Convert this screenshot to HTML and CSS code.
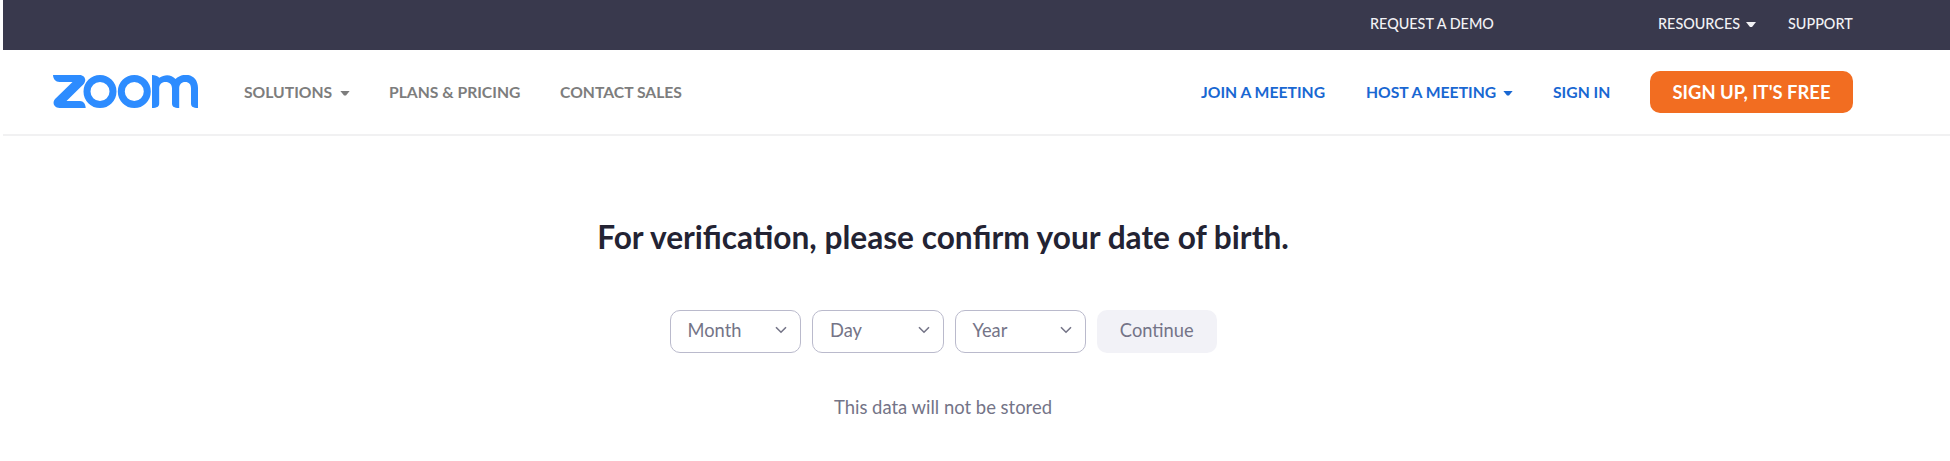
FILE: index.html
```html
<!DOCTYPE html>
<html lang="en">
<head>
<meta charset="utf-8">
<title>Verification - Zoom</title>
<link rel="stylesheet" href="styles.css">
</head>
<body>
<div class="page">
  <div class="topbar">
    <a class="demo">REQUEST A DEMO</a>
    <a class="resources">RESOURCES <i class="caret"></i></a>
    <a class="support">SUPPORT</a>
  </div>
  <header class="header">
    <svg class="logo" width="145" height="33" viewBox="0 0 145 33" fill="none" stroke="#2d8cff" stroke-width="7" aria-label="zoom">
      <path fill="#2d8cff" stroke="none" d="M0 0H26.500C32 0 34 5.500 30.500 9.200L13.500 26H27C30.500 26 32.500 29 32.700 33H6.500C.8 33-1.200 27.500 2.300 23.800L19.500 7H6.500C2.500 7 .2 4 0 0Z"/>
      <circle cx="47" cy="16.500" r="13"/>
      <circle cx="81.300" cy="16.500" r="13"/>
      <path fill="#2d8cff" stroke="none" d="M99 0C102 0 104.500 1 106.300 2.800C112 -1.200 118.500 -.6 122.500 4C131-4 145-.5 145 13V33C140 33 138 31.500 138 28.500V13.500C138 9.200 136 7 132.200 7S126.200 9.500 126.200 13.500V33C121 33 119 31.500 119 28.500V13.500C119 9.200 116.500 7 112.500 7S106.200 9.500 106.200 13.500V28.500C106.200 31.500 104 33 99 33Z"/>
    </svg>
    <nav class="nav">
      <a class="solutions">SOLUTIONS <i class="caret"></i></a>
      <a class="plans">PLANS &amp; PRICING</a>
      <a class="sales">CONTACT SALES</a>
    </nav>
    <nav class="nav nav-right">
      <a class="join">JOIN A MEETING</a>
      <a class="host">HOST A MEETING <i class="caret"></i></a>
      <a class="signin">SIGN IN</a>
      <a class="signup">SIGN UP, IT'S FREE</a>
    </nav>
  </header>
  <main class="main">
    <h1 class="title">For verification, please confirm your date of birth.</h1>
    <div class="form">
      <div class="select">Month<svg class="chevron" width="12" height="8" viewBox="0 0 12 8"><path d="M1 1.200l5 5 5-5"/></svg></div>
      <div class="select">Day<svg class="chevron" width="12" height="8" viewBox="0 0 12 8"><path d="M1 1.200l5 5 5-5"/></svg></div>
      <div class="select">Year<svg class="chevron" width="12" height="8" viewBox="0 0 12 8"><path d="M1 1.200l5 5 5-5"/></svg></div>
      <div class="continue">Continue</div>
    </div>
    <p class="note">This data will not be stored</p>
  </main>
</div>
</body>
</html>
```
FILE: styles.css
```css
* { box-sizing: border-box; }
body { margin: 0; background: #fff; font-family: Lato, sans-serif; }
.page { margin-left: 3px; height: 461px; overflow: hidden; }
.topbar { height: 50px; background: #39394d; color: #f2f2f5; display: flex; justify-content: flex-end; align-items: center; padding: 0 98px 3px 0; font-size: 14.400px; line-height: 20px; font-weight: 500; }
.topbar a, .nav a { white-space: nowrap; display: flex; align-items: center; justify-content: space-between; }
.demo { width: 124px; margin-right: 164px; }
.resources { width: 98px; margin-right: 32px; }
.support { width: 64px; }
.caret { width: 10px; height: 5px; margin-top: 2px; background: currentColor; clip-path: polygon(0 0, 100% 0, 60% 100%, 40% 100%); }
.header { height: 86px; border-bottom: 2px solid #f1f1f2; display: flex; align-items: center; padding: 0 97px 0 50px; }
.logo { flex: none; margin-top: -1px; }
.nav { display: flex; align-items: center; margin-left: 46px; color: #7d7d7d; font-size: 15.700px; font-weight: 700; line-height: 20px; }
.solutions { width: 106px; margin-right: 39px; }
.plans { width: 131px; margin-right: 40px; }
.sales { width: 122px; }
.nav-right { margin-left: auto; color: #1967d2; }
.join { width: 125px; margin-right: 40px; }
.host { width: 147px; margin-right: 40px; }
.signin { width: 56px; margin-right: 41px; }
.nav .signup { width: 203px; height: 42px; border-radius: 10px; background: #f26d21; color: #fff; font-size: 18.400px; justify-content: center; }
.main { width: 690px; margin: 81px 0 0 595px; display: flex; flex-direction: column; align-items: center; }
.title { margin: 0; font-size: 31.650px; line-height: 40px; font-weight: 700; color: #232333; white-space: nowrap; }
.form { display: flex; gap: 11px; margin-top: 53px; }
.select { width: 131.500px; height: 42.500px; border: 1.500px solid #babacc; border-radius: 10px; padding: 0 13px 2.500px 17px; display: flex; align-items: center; justify-content: space-between; font-size: 18.300px; color: #747487; }
.chevron { fill: none; stroke: #747487; stroke-width: 1.600; }
.continue { width: 119.500px; height: 42.500px; border-radius: 10px; background: #f2f2f7; color: #747487; font-size: 18.300px; display: flex; align-items: center; justify-content: center; padding-bottom: 3px; }
.note { margin: 42px 0 0; font-size: 18.450px; line-height: 24px; color: #747487; }
```
